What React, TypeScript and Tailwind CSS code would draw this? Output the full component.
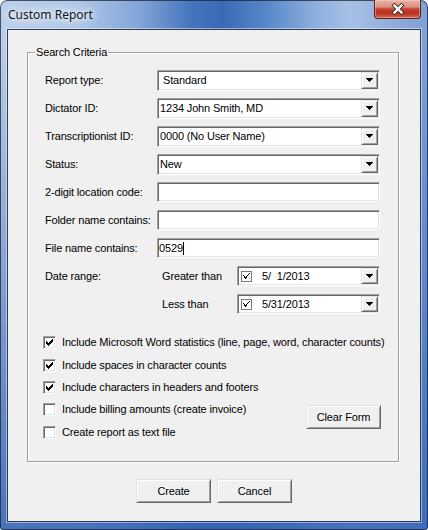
import type { ReactNode } from 'react';

// classic 3D edges
const SUNKEN =
  'border border-t-[#a0a0a0] border-l-[#a0a0a0] border-r-white border-b-white shadow-[inset_1px_1px_0_#696969,inset_-1px_-1px_0_#e3e3e3]';
const RAISED =
  'border border-t-[#e3e3e3] border-l-[#e3e3e3] border-r-[#696969] border-b-[#696969] shadow-[inset_1px_1px_0_#ffffff,inset_-1px_-1px_0_#a0a0a0] bg-[#f0f0f0]';

// pixel runs [x, y, w] of the classic 7x7 tick
const TICK: [number, number, number][] = [
  [6, 0, 1],
  [5, 1, 2],
  [0, 2, 1],
  [4, 2, 3],
  [0, 3, 2],
  [3, 3, 3],
  [0, 4, 5],
  [1, 5, 3],
  [2, 6, 1],
];

// lighter tick used by the date picker's own checkbox
const THIN_TICK: [number, number, number][] = [
  [6, 0, 1],
  [5, 1, 1],
  [0, 2, 1],
  [4, 2, 1],
  [1, 3, 1],
  [3, 3, 1],
  [1, 4, 3],
  [2, 5, 1],
];

function Tick({ thin }: { thin?: boolean }) {
  const runs = thin ? THIN_TICK : TICK;
  return (
    <svg width="7" height="7" viewBox="0 0 7 7" shapeRendering="crispEdges">
      {runs.map(([x, y, w], i) => (
        <rect key={i} x={x} y={y} width={w} height={1} fill="#000" />
      ))}
    </svg>
  );
}

function Arrow() {
  return (
    <svg width="7" height="4" viewBox="0 0 7 4" shapeRendering="crispEdges">
      <rect x="0" y="0" width="7" height="1" fill="#000" />
      <rect x="1" y="1" width="5" height="1" fill="#000" />
      <rect x="2" y="2" width="3" height="1" fill="#000" />
      <rect x="3" y="3" width="1" height="1" fill="#000" />
    </svg>
  );
}

function DropButton() {
  return (
    <div className={`${RAISED} w-[17px] h-full shrink-0 flex items-center justify-center`}>
      <Arrow />
    </div>
  );
}

function Combo({ value, indent }: { value: string; indent?: boolean }) {
  return (
    <div className={`${SUNKEN} flex-1 min-w-0 h-[21px] p-[1px] bg-white flex items-center`}>
      <span className={`flex-1 whitespace-nowrap ${indent ? 'pl-[4px]' : 'pl-[1px]'}`}>{value}</span>
      <DropButton />
    </div>
  );
}

function TextBox({ value, caret }: { value?: string; caret?: boolean }) {
  return (
    <div className={`${SUNKEN} flex-1 min-w-0 h-[20px] bg-white flex items-center pl-[1px]`}>
      <span className="whitespace-nowrap">{value}</span>
      {caret && <span className="w-[1px] h-[13px] bg-black" />}
    </div>
  );
}

function DateBox({ value }: { value: string }) {
  return (
    <div className={`${SUNKEN} flex-1 min-w-0 h-[20px] p-[1px] bg-white flex items-center`}>
      <div className="ml-[2px] w-[11px] h-[11px] border border-[#7a7a7a] bg-white flex items-center justify-center">
        <Tick thin />
      </div>
      <span className="flex-1 pl-[10px] whitespace-pre">{value}</span>
      <DropButton />
    </div>
  );
}

function Row({ label, children }: { label?: string; children: ReactNode }) {
  return (
    <div className="h-[28px] flex items-center">
      <span className="w-[112px] shrink-0">{label}</span>
      {children}
    </div>
  );
}

function DateRow({ label, sub, value }: { label?: string; sub: string; value: string }) {
  return (
    <Row label={label}>
      <span className="w-[80px] shrink-0 pl-[5px]">{sub}</span>
      <DateBox value={value} />
    </Row>
  );
}

function CheckBox({ checked }: { checked: boolean }) {
  return (
    <div className={`${SUNKEN} w-[13px] h-[13px] shrink-0 bg-white flex items-center justify-center`}>
      {checked && <Tick />}
    </div>
  );
}

function CheckRow({ label, checked, tall }: { label: string; checked: boolean; tall?: boolean }) {
  return (
    <div className={`flex items-start pt-[5px] gap-[6px] -ml-[2px] ${tall ? 'h-[23px]' : 'h-[22px]'}`}>
      <CheckBox checked={checked} />
      <span className="leading-[13px] whitespace-nowrap">{label}</span>
    </div>
  );
}

function PushButton({ children }: { children: ReactNode }) {
  return (
    <div className={`${RAISED} w-[75px] h-[24px] flex items-center justify-center`}>
      {children}
    </div>
  );
}

function CloseButton() {
  return (
    <div className="ml-auto mr-[7px] w-[47px] h-[19px] rounded-b-[4px] border border-t-0 border-[#5b2118] bg-[linear-gradient(180deg,#eab5aa_0%,#d99080_38%,#c4442e_50%,#b5301c_72%,#d7664e_100%)] shadow-[inset_0_0_0_1px_rgba(255,210,200,0.45)] flex items-center justify-center">
      <svg width="14" height="12" viewBox="0 0 14 12">
        <path d="M3.5 2.5 L10.5 9.5 M10.5 2.5 L3.5 9.5" stroke="#4a2b27" strokeWidth="4.2" strokeLinecap="square" fill="none" />
        <path d="M3.5 2.5 L10.5 9.5 M10.5 2.5 L3.5 9.5" stroke="#ffffff" strokeWidth="2.4" strokeLinecap="square" fill="none" />
      </svg>
    </div>
  );
}

export default function App() {
  return (
    <div className="w-[428px] h-[530px] bg-white">
      <div className="w-full h-full flex flex-col rounded-t-[7px] rounded-b-[3px] overflow-hidden bg-[linear-gradient(180deg,rgba(255,255,255,0)_0px,rgba(255,255,255,0)_36px,rgba(52,98,180,0.85)_100%),linear-gradient(90deg,#bccfea_0%,#b0c7e7_18%,#84a7d9_32%,#4474bc_45%,#3a6ab5_52%,#5686c9_62%,#8fb0de_74%,#a7c0e5_82%,#7e9fd5_100%)] shadow-[inset_0_0_0_1px_rgba(25,35,55,0.75)]">
        {/* caption */}
        <div className="h-[29px] shrink-0 flex items-start">
          <span className="ml-[8px] self-center text-[12px] leading-[16px] text-[#101820] font-['Noto_Sans',sans-serif] [text-shadow:0_0_6px_#ffffff,0_0_10px_#ffffff,0_0_14px_rgba(255,255,255,0.8)]">
            Custom Report
          </span>
          <CloseButton />
        </div>

        {/* client area */}
        <div className="flex-1 min-w-0 mx-[7px] mb-[8px] border border-[#2e3d55] shadow-[0_0_0_1px_rgba(255,255,255,0.45)] bg-[#f0f0f0] flex flex-col text-[11px] tracking-[-0.15px] text-black font-['Liberation_Sans',Arial,sans-serif]">
          <fieldset className="min-w-0 mt-[16px] ml-[19px] mr-[21px] px-[7px] pt-[7px] pb-[17px] border border-[#a0a0a0] shadow-[inset_1px_1px_0_#ffffff,1px_1px_0_#ffffff]">
            <legend className="px-[1px] leading-[13px]">Search Criteria</legend>
            <div className="min-w-0 pl-[10px] pr-[11px] flex flex-col">
              <Row label="Report type:">
                <Combo value="Standard" indent />
              </Row>
              <Row label="Dictator ID:">
                <Combo value="1234 John Smith, MD" />
              </Row>
              <Row label="Transcriptionist ID:">
                <Combo value="0000 (No User Name)" />
              </Row>
              <Row label="Status:">
                <Combo value="New" />
              </Row>
              <Row label="2-digit location code:">
                <TextBox />
              </Row>
              <Row label="Folder name contains:">
                <TextBox />
              </Row>
              <Row label="File name contains:">
                <TextBox value="0529" caret />
              </Row>
              <DateRow label="Date range:" sub="Greater than" value={'5/  1/2013'} />
              <DateRow sub="Less than" value="5/31/2013" />

              <div className="mt-[13px] min-w-0 flex flex-col">
                <CheckRow checked tall label="Include Microsoft Word statistics (line, page, word, character counts)" />
                <CheckRow checked label="Include spaces in character counts" />
                <CheckRow checked label="Include characters in headers and footers" />
                <CheckRow checked={false} tall label="Include billing amounts (create invoice)" />
                <CheckRow checked={false} tall label="Create report as text file" />
              </div>
              <div className="-mt-[39px] mb-[15px] self-end -mr-[1px]">
                <PushButton>Clear Form</PushButton>
              </div>
            </div>
          </fieldset>

          <div className="mt-[17px] flex justify-center gap-[6px]">
            <PushButton>Create</PushButton>
            <PushButton>Cancel</PushButton>
          </div>
        </div>
      </div>
    </div>
  );
}
